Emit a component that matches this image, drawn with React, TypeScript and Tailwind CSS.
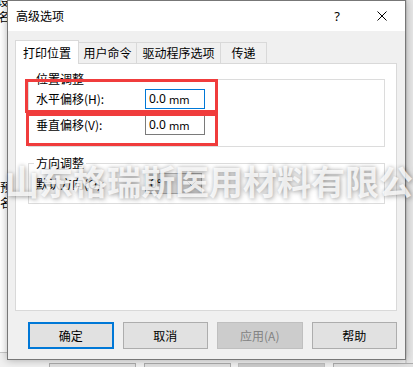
const TABS = [
  { label: "用户命令", w: "w-[59px]" },
  { label: "驱动程序选项", w: "w-[85px]" },
  { label: "传递", w: "w-[47px]" },
];

function Field({ label, focused }: { label: string; focused?: boolean }) {
  return (
    <div className="flex items-center h-[20px]">
      <span className="w-[109px]">{label}</span>
      <div
        className={`w-[60px] h-[20px] flex items-center pl-[3px] bg-white border ${
          focused ? "border-[#0078d7]" : "border-[#7a7a7a]"
        }`}
      >
        <span className="font-['Noto_Sans',sans-serif] text-[12px]">0.0</span>
        <span className="ml-[3px] font-['Noto_Sans',sans-serif] text-[11px]">mm</span>
      </div>
    </div>
  );
}

function Button({ label, kind }: { label: string; kind?: "default" | "disabled" }) {
  const cls =
    kind === "default"
      ? "border-2 border-[#0078d7] bg-[#e1e1e1] text-black"
      : kind === "disabled"
      ? "border border-[#bfbfbf] bg-[#cccccc] text-[#838383]"
      : "border border-[#adadad] bg-[#e1e1e1] text-black";
  return <div className={`w-[86px] h-[27px] flex items-center justify-center ${cls}`}>{label}</div>;
}

export default function App() {
  return (
    <div className="relative w-[413px] h-[367px] overflow-hidden bg-[#f0f0f0] font-['Noto_Sans_CJK_SC',sans-serif] text-[12px] leading-none text-black">
      {/* window behind the dialog */}
      <div className="absolute left-0 top-0 w-[8px] h-[353px] bg-white border-b border-[#c8c8c8] overflow-hidden">
        <span className="absolute left-[-3px] top-[-5px] text-[12px]">设</span>
        <span className="absolute left-[-2px] top-[11px] text-[12px]">名</span>
        <span className="absolute left-[0px] top-[181px] text-[12px]">预</span>
        <span className="absolute left-[0px] top-[197px] text-[12px]">名</span>
      </div>
      <div className="absolute right-0 top-0 w-[8px] h-[367px] bg-[#e6e6e6] border-l-2 border-[#d4d4d4]" />
      <div className="absolute left-[49px] top-[363px] w-[87px] h-[10px] bg-[#e1e1e1] border border-[#adadad]" />
      <div className="absolute left-[144px] top-[363px] w-[87px] h-[10px] bg-[#e1e1e1] border border-[#adadad]" />
      <div className="absolute left-[238px] top-[363px] w-[87px] h-[10px] bg-[#cccccc] border border-[#bfbfbf]" />
      <div className="absolute left-[333px] top-[363px] w-[87px] h-[10px] bg-[#e1e1e1] border border-[#adadad]" />

      {/* dialog */}
      <div className="absolute left-[7px] top-0 w-[399px] h-[360px] flex flex-col border border-[#777777] bg-[#f0f0f0] shadow-[0_0_8px_rgba(0,0,0,0.3)]">
        <div className="h-[30px] bg-white flex items-center pl-[8px]">
          <span className="text-[12px]">高级选项</span>
          <span className="ml-auto mr-[37px] font-['Noto_Sans',sans-serif] text-[13px]">?</span>
          <svg width="10" height="10" viewBox="0 0 10 10" className="mr-[18px]">
            <path d="M0.5 0.5 L9.5 9.5 M9.5 0.5 L0.5 9.5" stroke="#000" strokeWidth="1" />
          </svg>
        </div>

        <div className="flex-1 flex flex-col pl-[7px] pr-[8px] pt-[9px] pb-[10px]">
          <div className="flex items-end h-[23px]">
            <div className="relative z-10 w-[64px] h-[24px] -mb-px flex items-center justify-center bg-white border border-b-0 border-[#d9d9d9]">
              打印位置
            </div>
            {TABS.map((t) => (
              <div
                key={t.label}
                className={`${t.w} h-[21px] -ml-px flex items-center justify-center border border-b-0 border-[#d9d9d9] bg-[#f0f0f0]`}
              >
                {t.label}
              </div>
            ))}
          </div>

          <div className="h-[248px] bg-white border border-[#d9d9d9] pl-[12px] pr-[11px]">
            <fieldset className="mt-[9px] border border-[#dcdcdc] pl-[7px] pb-[11px]">
              <legend className="-ml-[2px] px-[2px] leading-[12px]">位置调整</legend>
              <div className="mt-[4px] flex flex-col gap-[6px]">
                <Field label="水平偏移(H):" focused />
                <Field label="垂直偏移(V):" />
              </div>
            </fieldset>

            <fieldset className="mt-[10px] border border-[#dcdcdc] pl-[7px] pb-[9px]">
              <legend className="-ml-[2px] px-[2px] leading-[12px]">方向调整</legend>
              <div className="mt-[4px] flex items-center h-[21px]">
                <span className="w-[109px]">默认方向(O):</span>
                <div className="w-[57px] h-[21px] flex items-center pl-[4px] pr-[5px] bg-[#e1e1e1] border border-[#adadad]">
                  <span className="font-['Noto_Sans',sans-serif]">0°</span>
                  <svg width="9" height="5" viewBox="0 0 9 5" className="ml-auto">
                    <path d="M0.5 0.5 L4.5 4.5 L8.5 0.5" fill="none" stroke="#333" strokeWidth="1" />
                  </svg>
                </div>
              </div>
            </fieldset>
          </div>

          <div className="mt-[11px] flex gap-[9px] pl-[13px]">
            <Button label="确定" kind="default" />
            <Button label="取消" />
            <Button label="应用(A)" kind="disabled" />
            <Button label="帮助" />
          </div>
        </div>
      </div>

      {/* watermark */}
      <div className="absolute left-[5px] top-[164px] whitespace-nowrap text-[34px] leading-none font-bold text-white/80 [text-shadow:0_0_4px_rgba(0,0,0,0.28),2px_2px_5px_rgba(0,0,0,0.18)] pointer-events-none">
        山东格瑞斯医用材料有限公司
      </div>

      {/* red annotation boxes */}
      <div className="absolute left-[25px] top-[79px] w-[193px] h-[34px] border-[3px] border-[#f03c3c]" />
      <div className="absolute left-[26px] top-[113px] w-[192px] h-[33px] border-[3px] border-[#f03c3c]" />
    </div>
  );
}
